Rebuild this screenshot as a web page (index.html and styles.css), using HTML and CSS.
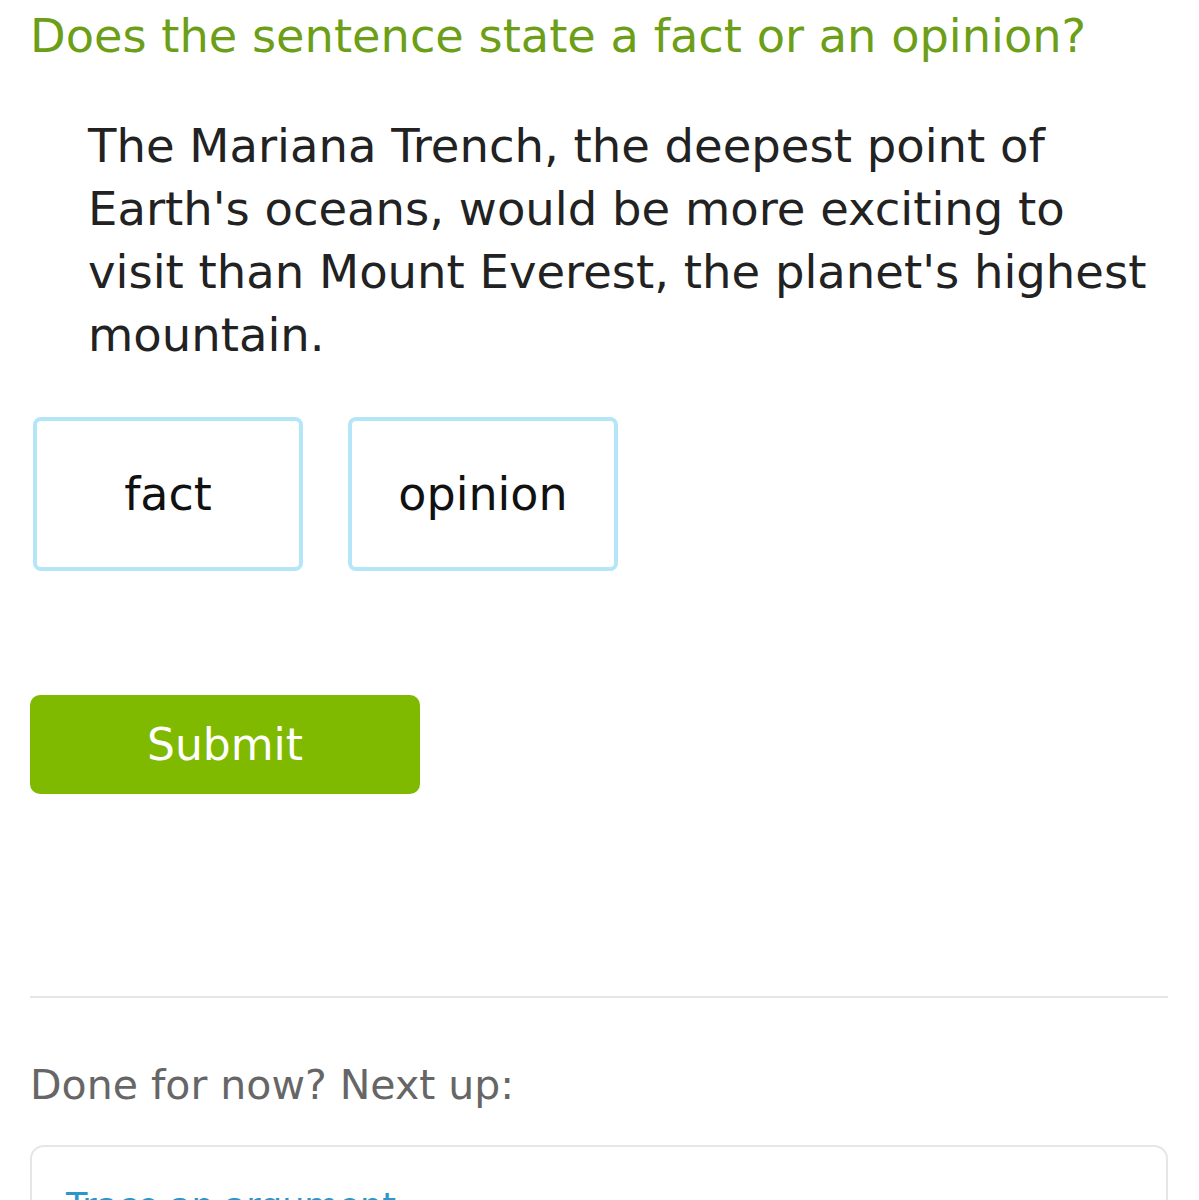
FILE: index.html
```html
<!DOCTYPE html>
<html>
<head>
<meta charset="utf-8">
<link rel="stylesheet" href="styles.css">
</head>
<body>
<main class="page">
  <h1 class="prompt">Does the sentence state a fact or an opinion?</h1>
  <p class="sentence">The Mariana Trench, the deepest point of Earth's oceans, would be more exciting to visit than Mount Everest, the planet's highest mountain.</p>
  <div class="choices">
    <button class="choice">fact</button>
    <button class="choice">opinion</button>
  </div>
  <button class="submit">Submit</button>
  <hr class="divider">
  <p class="next-label">Done for now? Next up:</p>
  <div class="next-card">
    <a class="next-link">Trace an argument</a>
  </div>
</main>
</body>
</html>
```
FILE: styles.css
```css
html, body {
  margin: 0;
  padding: 0;
  background: #fff;
}
body {
  font-family: "DejaVu Sans", Verdana, sans-serif;
  overflow: hidden;
  height: 1200px;
}
.page {
  padding: 0 31px 0 30px;
}
.prompt {
  margin: 0;
  padding-top: 7px;
  font-size: 46.3px;
  font-weight: normal;
  color: #6c9f17;
  line-height: 58px;
}
.sentence {
  margin: 50px 0 0 58px;
  font-size: 46.5px;
  line-height: 63px;
  color: #222;
  width: 1075px;
}
.choices {
  display: flex;
  gap: 45px;
  margin-top: 50px;
  padding-left: 3px;
}
.choice {
  width: 270px;
  height: 154px;
  box-sizing: border-box;
  border: 4px solid #b4e6f8;
  border-radius: 8px;
  background: #fff;
  font-family: inherit;
  font-size: 46px;
  color: #111;
  padding: 0;
}
.submit {
  display: block;
  margin-top: 124px;
  width: 390px;
  height: 99px;
  border: none;
  border-radius: 10px;
  background: #80ba00;
  color: #fff;
  font-family: inherit;
  font-size: 44px;
  padding: 0;
}
.divider {
  margin: 202px 0 0 0;
  border: none;
  border-top: 2px solid #e6e6e6;
  height: 0;
}
.next-label {
  margin: 62px 0 0 0;
  font-size: 41px;
  line-height: 50px;
  color: #666;
}
.next-card {
  margin-top: 35px;
  border: 2px solid #e6e6e6;
  border-radius: 14px;
  height: 200px;
  padding: 37px 34px;
  box-sizing: border-box;
}
.next-link {
  font-size: 35px;
  color: #2a96cc;
  line-height: 44px;
}
```
